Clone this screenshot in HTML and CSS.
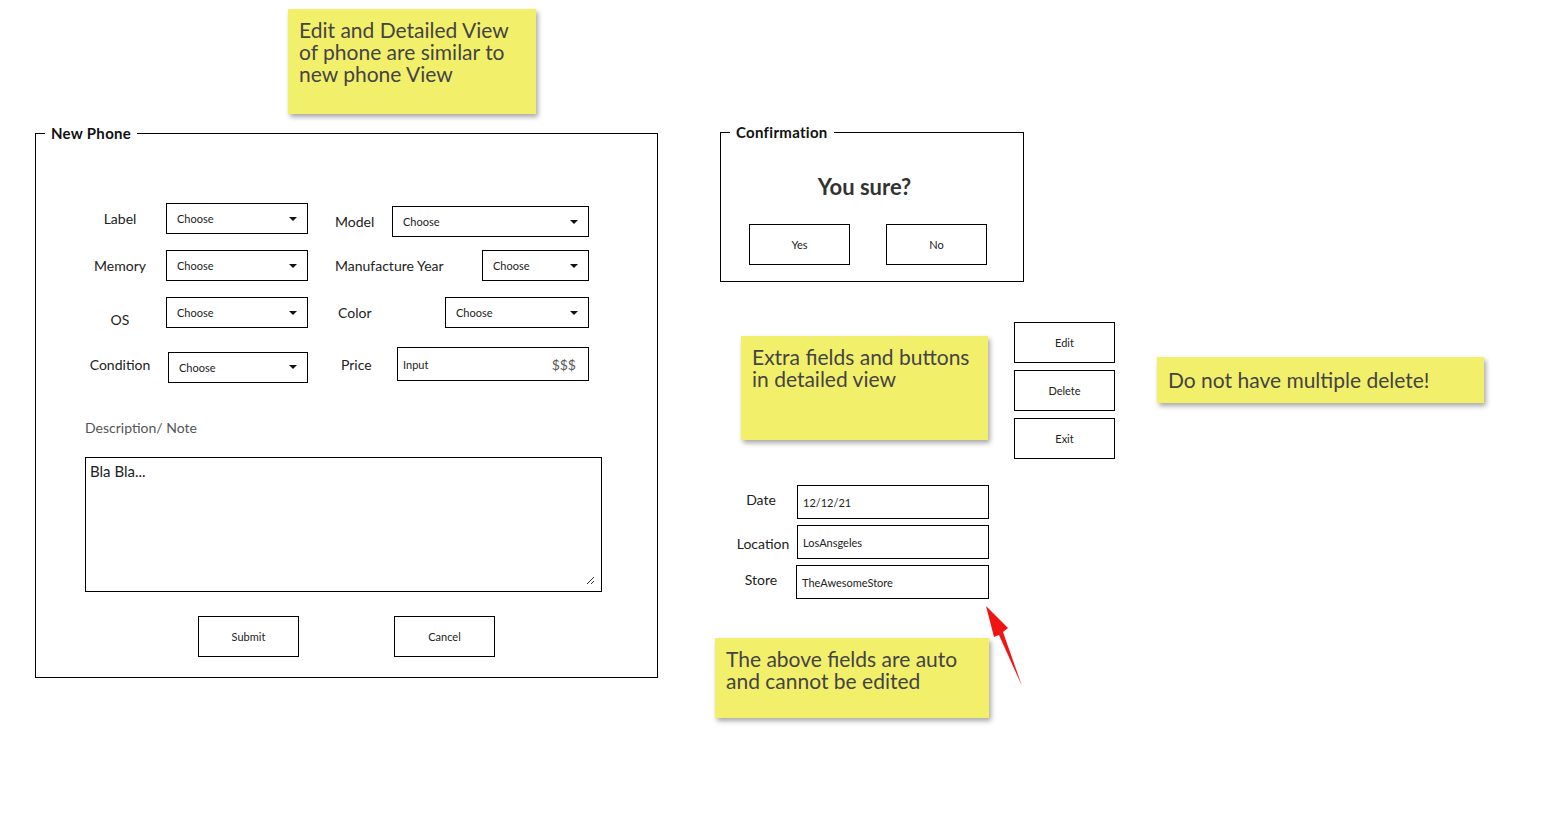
FILE: index.html
```html
<!DOCTYPE html>
<html lang="en">
<head>
    <meta charset="UTF-8">
    <meta name="viewport" content="width=device-width, initial-scale=1.0">
    <title>Phone Mockups</title>
    <link rel="stylesheet" href="styles.css">
</head>
<body>
    <div class="canvas">
        <!-- Sticky notes -->
        <div class="note note--intro">Edit and Detailed View of phone are similar to new phone View</div>
        <div class="note note--extra">Extra fields and buttons in detailed view</div>
        <div class="note note--delete">Do not have multiple delete!</div>
        <div class="note note--auto">The above fields are auto and cannot be edited</div>

        <!-- New Phone form -->
        <section class="panel panel--phone">
            <span class="panel-legend">New Phone</span>
            <div class="phone-grid">
                <span class="field-label">Label</span>
                <div class="select">Choose<span class="caret"></span></div>
                <div class="field-pair field-pair--low">
                    <span class="field-label">Model</span>
                    <div class="select select--model">Choose<span class="caret"></span></div>
                </div>

                <span class="field-label">Memory</span>
                <div class="select">Choose<span class="caret"></span></div>
                <div class="field-pair">
                    <span class="field-label">Manufacture Year</span>
                    <div class="select select--year">Choose<span class="caret"></span></div>
                </div>

                <span class="field-label field-label--os">OS</span>
                <div class="select">Choose<span class="caret"></span></div>
                <div class="field-pair">
                    <span class="field-label field-label--color">Color</span>
                    <div class="select select--color">Choose<span class="caret"></span></div>
                </div>

                <span class="field-label field-label--high">Condition</span>
                <div class="select select--shift">Choose<span class="caret"></span></div>
                <div class="field-pair field-pair--high">
                    <span class="field-label field-label--price">Price</span>
                    <div class="text-input text-input--price">Input<span class="currency">$$$</span></div>
                </div>
            </div>

            <div class="desc-label">Description/ Note</div>
            <div class="textarea">
                Bla Bla...
                <svg class="grip" width="10" height="10" viewBox="0 0 10 10">
                    <path d="M2 9 L9 2 M6 9 L9 6" stroke="#333" stroke-width="1" fill="none"/>
                </svg>
            </div>

            <div class="form-actions">
                <button class="btn">Submit</button>
                <button class="btn">Cancel</button>
            </div>
        </section>

        <!-- Confirmation dialog -->
        <section class="panel panel--confirm">
            <span class="panel-legend">Confirmation</span>
            <h2 class="confirm-title">You sure?</h2>
            <div class="confirm-actions">
                <button class="btn">Yes</button>
                <button class="btn">No</button>
            </div>
        </section>

        <!-- Detailed view buttons -->
        <div class="detail-actions">
            <button class="btn">Edit</button>
            <button class="btn">Delete</button>
            <button class="btn">Exit</button>
        </div>

        <!-- Detailed view auto fields -->
        <div class="detail-grid">
            <span class="field-label">Date</span>
            <div class="text-input">12/12/21</div>
            <span class="field-label field-label--location">Location</span>
            <div class="text-input">LosAnsgeles</div>
            <span class="field-label">Store</span>
            <div class="text-input text-input--store">TheAwesomeStore</div>
        </div>

        <svg class="arrow" width="50" height="95" viewBox="0 0 50 95">
            <polygon points="5,5 27,27 22,31 41,85 18,34 13,36" fill="#f01414"/>
        </svg>
    </div>
</body>
</html>
```

FILE: styles.css
```css
/* General */
body {
    margin: 0;
    background: #fff;
    font-family: Lato, 'Liberation Sans', sans-serif;
    color: #222;
}

.canvas {
    position: relative;
    width: 1559px;
    height: 828px;
    overflow: hidden;
}

/* Sticky notes */
.note {
    position: absolute;
    box-sizing: border-box;
    background: #f2f06b;
    box-shadow: 2px 3px 5px rgba(0, 0, 0, 0.35);
    color: #444;
    font-size: 21px;
    line-height: 22px;
    padding: 10px 20px 10px 11px;
}

.note--intro {
    left: 288px;
    top: 9px;
    width: 248px;
    height: 105px;
}

.note--extra {
    left: 741px;
    top: 336px;
    width: 247px;
    height: 104px;
    padding-right: 11px;
}

.note--delete {
    left: 1157px;
    top: 357px;
    width: 327px;
    height: 46px;
    padding-top: 12px;
}

.note--auto {
    left: 715px;
    top: 638px;
    width: 274px;
    height: 80px;
    padding-right: 11px;
}

/* Panels */
.panel {
    position: absolute;
    box-sizing: border-box;
    border: 1px solid #000;
}

.panel-legend {
    position: absolute;
    top: -11px;
    left: 9px;
    padding: 0 6px;
    background: #fff;
    font-size: 15px;
    font-weight: bold;
    letter-spacing: 0.3px;
    line-height: 20px;
    color: #111;
}

.panel--phone {
    left: 35px;
    top: 133px;
    width: 623px;
    height: 545px;
    padding: 69px 55px 0 49px;
}

.panel--confirm {
    left: 720px;
    top: 132px;
    width: 304px;
    height: 150px;
    padding: 0 28px;
}

/* Form fields */
.phone-grid {
    display: grid;
    grid-template-columns: 70px 142px 270px;
    grid-template-rows: 31px 31px 31px 46px;
    column-gap: 11px;
    row-gap: 16px;
    align-items: center;
}

.field-pair {
    display: flex;
    align-items: center;
    justify-content: space-between;
    margin-left: 16px;
}

.field-pair--low {
    margin-top: 6px;
}

.field-pair--high {
    margin-bottom: 6px;
}

.field-label {
    font-size: 14px;
    text-align: center;
    color: #222;
}

.field-label--os {
    padding-top: 13px;
}

.field-label--high {
    padding-bottom: 6px;
}

.field-label--color {
    padding-left: 3px;
}

.field-label--price {
    padding-left: 6px;
}

.select,
.text-input {
    box-sizing: border-box;
    display: flex;
    align-items: center;
    justify-content: space-between;
    height: 31px;
    border: 1px solid #000;
    padding: 0 10px;
    font-size: 11px;
    color: #222;
    background: #fff;
}

.select--shift {
    margin-left: 2px;
}

.select--model {
    width: 197px;
}

.select--year {
    width: 107px;
}

.select--color {
    width: 144px;
}

.caret {
    width: 0;
    height: 0;
    border-left: 4px solid transparent;
    border-right: 4px solid transparent;
    border-top: 4px solid #111;
}

.text-input {
    height: 34px;
    padding: 0 5px;
    justify-content: flex-start;
}

.text-input--price {
    width: 192px;
    justify-content: space-between;
    padding-right: 12px;
}

.text-input--store {
    margin-left: -1px;
}

.currency {
    font-size: 14px;
    color: #555;
}

.desc-label {
    margin-top: 29px;
    font-size: 14px;
    line-height: 18px;
    color: #555;
}

.textarea {
    position: relative;
    box-sizing: border-box;
    height: 135px;
    margin-top: 20px;
    border: 1px solid #000;
    padding: 4px 4px;
    font-size: 15px;
    line-height: 18px;
}

.grip {
    position: absolute;
    right: 6px;
    bottom: 6px;
}

/* Buttons */
.btn {
    box-sizing: border-box;
    width: 101px;
    height: 41px;
    border: 1px solid #000;
    background: #fff;
    font-family: inherit;
    font-size: 11px;
    color: #222;
    padding: 0;
}

.form-actions {
    display: flex;
    justify-content: center;
    gap: 95px;
    margin-top: 24px;
    padding-left: 6px;
}

.confirm-title {
    margin: 42px 0 0 0;
    padding-right: 15px;
    font-size: 22px;
    line-height: 24px;
    text-align: center;
    color: #333;
}

.confirm-actions {
    display: flex;
    gap: 36px;
    margin-top: 25px;
}

.detail-actions {
    position: absolute;
    left: 1014px;
    top: 322px;
    display: flex;
    flex-direction: column;
    gap: 7px;
}

.detail-grid {
    position: absolute;
    left: 730px;
    top: 485px;
    display: grid;
    grid-template-columns: 62px 192px;
    grid-auto-rows: 34px;
    column-gap: 5px;
    row-gap: 6px;
    align-items: center;
}

.detail-grid .field-label {
    align-self: start;
    padding-top: 6px;
}

.detail-grid .field-label--location {
    padding-top: 10px;
    padding-left: 4px;
}

/* Red callout arrow */
.arrow {
    position: absolute;
    left: 981px;
    top: 601px;
}
```
